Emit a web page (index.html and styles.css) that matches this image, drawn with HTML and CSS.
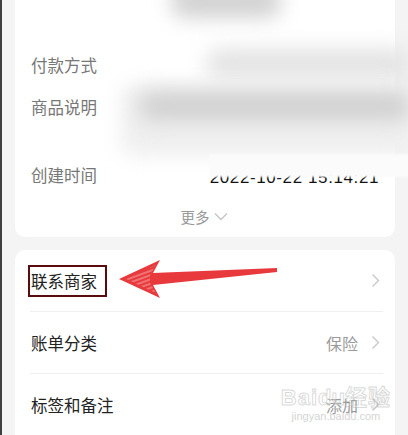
FILE: index.html
```html
<!DOCTYPE html>
<html lang="zh-CN">
<head>
    <meta charset="UTF-8">
    <meta name="viewport" content="width=device-width, initial-scale=1.0">
    <title>账单详情</title>
    <link rel="stylesheet" href="styles.css">
</head>
<body>
    <div class="page">
        <div class="card detail-card">
            <div class="head-blur"><span class="blob head-blob"></span></div>

            <div class="info-row">
                <span class="info-label">付款方式</span>
                <span class="blob pay-blob"></span>
            </div>
            <div class="info-row tall">
                <span class="info-label">商品说明</span>
                <span class="blob desc-blob-light"></span>
                <span class="blob desc-blob"></span>
            </div>
            <div class="info-row">
                <span class="info-label">创建时间</span>
                <span class="info-value date">2022-10-22 15:14:21</span>
                <span class="blob date-cover"></span>
            </div>

            <div class="more">
                更多
                <svg width="14" height="9" viewBox="0 0 14 9"><path d="M1 1.5 L7 7.5 L13 1.5" fill="none" stroke="#c4c4c4" stroke-width="1.3"/></svg>
            </div>
        </div>

        <div class="card menu-card">
            <div class="menu-row">
                <span class="menu-label boxed">联系商家</span>
                <span class="menu-right">
                    <svg class="chev" width="9" height="15" viewBox="0 0 9 15"><path d="M1.5 1.5 L7.5 7.5 L1.5 13.5" fill="none" stroke="#c8c8c8" stroke-width="1.4"/></svg>
                </span>
            </div>
            <div class="menu-row">
                <span class="menu-label">账单分类</span>
                <span class="menu-right">
                    <span class="menu-value">保险</span>
                    <svg class="chev" width="9" height="15" viewBox="0 0 9 15"><path d="M1.5 1.5 L7.5 7.5 L1.5 13.5" fill="none" stroke="#c8c8c8" stroke-width="1.4"/></svg>
                </span>
            </div>
            <div class="menu-row">
                <span class="menu-label">标签和备注</span>
                <span class="menu-right">
                    <span class="menu-value">添加</span>
                    <svg class="chev" width="9" height="15" viewBox="0 0 9 15"><path d="M1.5 1.5 L7.5 7.5 L1.5 13.5" fill="none" stroke="#c8c8c8" stroke-width="1.4"/></svg>
                </span>
                <div class="watermark">
                    <span class="wm-big">Bai<span class="wm-paw">du</span>经验</span>
                    <span class="wm-small">jingyan.baidu.com</span>
                </div>
            </div>
        </div>

        <!-- annotation arrow pointing at 联系商家 -->
        <svg class="arrow" width="170" height="50" viewBox="115 255 170 50">
            <defs>
                <pattern id="hatch" width="4" height="4" patternUnits="userSpaceOnUse" patternTransform="rotate(-20)">
                    <line x1="0" y1="2" x2="4" y2="2" stroke="#ffd6d6" stroke-width="0.9"/>
                </pattern>
            </defs>
            <polygon points="119,279 160,260 153,273 277,268 277,272 153,285 160,298" fill="#e83a3c"/>
            <polygon points="126,279 156,265 150,275 150,283 156,293" fill="url(#hatch)" opacity="0.8"/>
        </svg>
    </div>
</body>
</html>
```

FILE: styles.css
```css
body {
    margin: 0;
    background-color: #f4f4f4;
    font-family: "Noto Sans CJK SC", "Liberation Sans", sans-serif;
    border-left: 2px solid #3f3f3f;
    min-height: 435px;
    box-sizing: border-box;
    overflow: hidden;
}
.page {
    position: relative;
    padding: 0 13px 0 13px;
    display: flex;
    flex-direction: column;
    gap: 13px;
}
.card {
    background-color: #fff;
    border-radius: 10px;
}
.detail-card {
    border-top-left-radius: 0;
    border-top-right-radius: 0;
    padding: 0 16px 3px;
    height: 237px;
    box-sizing: border-box;
}
.blob {
    position: absolute;
    border-radius: 14px;
    filter: blur(10px);
}
.head-blur {
    position: relative;
    height: 44px;
}
.head-blob {
    left: 140px;
    top: -16px;
    width: 110px;
    height: 34px;
    background-color: #d2d2d2;
}
.info-row {
    position: relative;
    height: 42px;
    display: flex;
    align-items: center;
    justify-content: space-between;
}
.info-row.tall {
    height: 68px;
    align-items: flex-start;
}
.info-row.tall .info-label {
    line-height: 42px;
}
.info-label {
    color: #777;
    font-size: 16.5px;
    position: relative;
    z-index: 1;
}
.pay-blob {
    left: 175px;
    top: 4px;
    width: 205px;
    height: 32px;
    background-color: #e4e4e4;
}
.desc-blob-light {
    left: 90px;
    top: -2px;
    width: 292px;
    height: 72px;
    background-color: #efefef;
}
.desc-blob {
    left: 108px;
    top: 6px;
    width: 272px;
    height: 28px;
    background-color: #d0d0d0;
}
.info-value.date {
    color: #111;
    font-family: "Liberation Sans", sans-serif;
    font-size: 17px;
    letter-spacing: 0.6px;
    padding-top: 6px;
}
.date-cover {
    left: 178px;
    top: 0;
    width: 210px;
    height: 23px;
    background-color: #fbfbfb;
    filter: blur(1px);
    border-radius: 2px;
}
.more {
    height: 40px;
    display: flex;
    align-items: center;
    justify-content: center;
    gap: 4px;
    color: #999;
    font-size: 14.5px;
    padding-right: 2px;
}
.menu-card {
    padding: 0 12px 0 15px;
    height: 200px;
}
.menu-row {
    position: relative;
    height: 61px;
    display: flex;
    align-items: center;
    justify-content: space-between;
    border-bottom: 1px solid #efefef;
    padding-left: 1px;
}
.menu-label {
    position: relative;
    color: #222;
    font-size: 16.5px;
}
.menu-label.boxed::after {
    content: "";
    position: absolute;
    left: -3px;
    right: -10px;
    top: -4px;
    bottom: -4px;
    border: 2px solid #5a0b0e;
}
.menu-right {
    display: flex;
    align-items: center;
    gap: 13px;
    padding-right: 3px;
}
.menu-value {
    color: #9a9a9a;
    font-size: 16px;
}
.watermark {
    position: absolute;
    right: -8px;
    top: 12px;
    display: flex;
    flex-direction: column;
    align-items: center;
    pointer-events: none;
}
.wm-big {
    font-family: "Liberation Sans", "Noto Sans CJK SC", sans-serif;
    font-size: 22px;
    font-weight: bold;
    line-height: 24px;
    color: rgba(255, 255, 255, 0.3);
    -webkit-text-stroke: 1px rgba(170, 170, 170, 0.45);
    letter-spacing: 1px;
}
.wm-paw {
    letter-spacing: 0;
}
.wm-small {
    font-family: "Liberation Sans", sans-serif;
    font-size: 11px;
    color: rgba(180, 180, 180, 0.6);
}
.arrow {
    position: absolute;
    left: 113px;
    top: 255px;
}
```
